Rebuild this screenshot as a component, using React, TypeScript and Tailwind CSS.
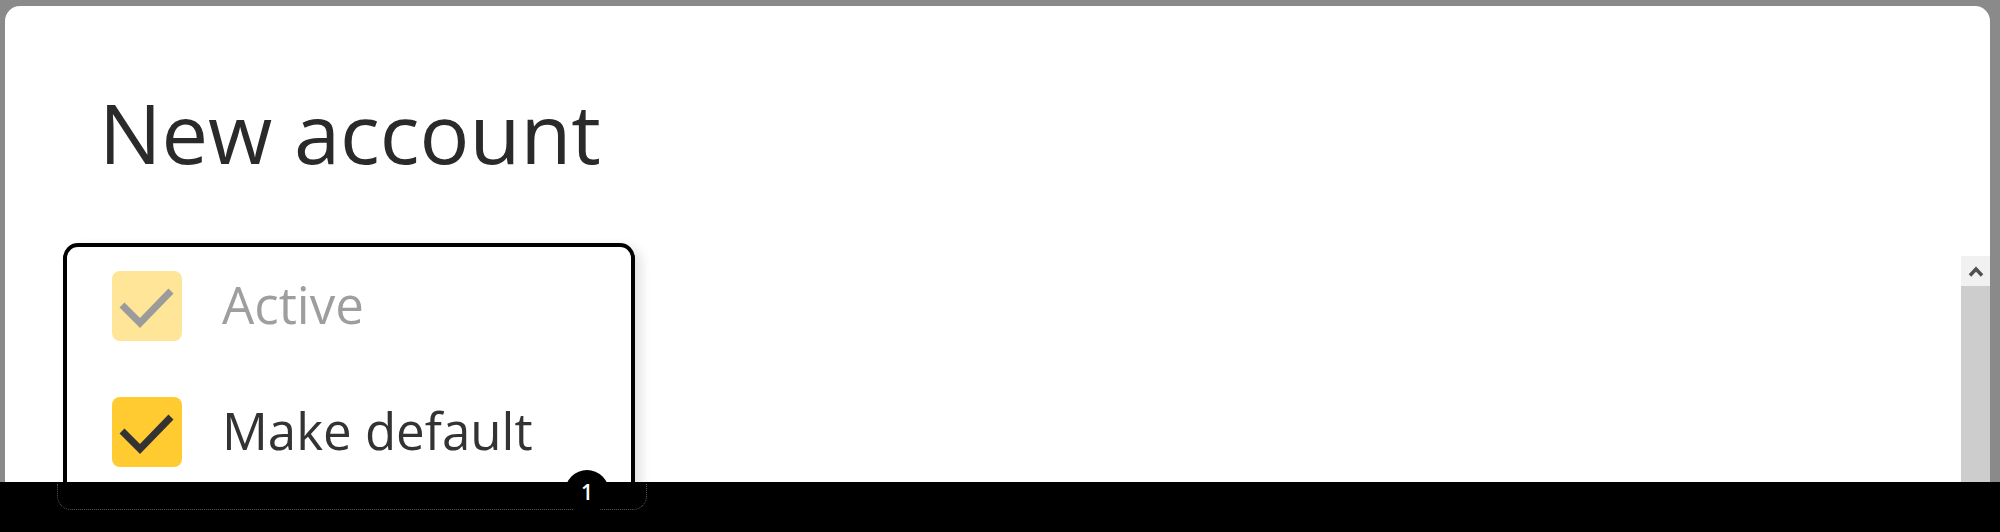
import React from "react";

function Check({ color }: { color: string }) {
  return (
    <svg width="70" height="70" viewBox="0 0 70 70" fill="none">
      <polyline
        points="10,34 28,52 59,20"
        stroke={color}
        strokeWidth="7"
        strokeLinecap="butt"
        strokeLinejoin="miter"
      />
    </svg>
  );
}

function Option({ label, disabled }: { label: string; disabled?: boolean }) {
  return (
    <label className="flex items-center gap-[40px]">
      <span
        className={
          disabled
            ? "w-[70px] h-[70px] rounded-[8px] bg-[#ffe598] shrink-0"
            : "w-[70px] h-[70px] rounded-[8px] bg-[#ffcb30] shrink-0"
        }
      >
        <Check color={disabled ? "#9b9b9b" : "#333333"} />
      </span>
      <span
        className={
          disabled
            ? "text-[51px] leading-[51px] text-[#9e9e9e] -mt-[4px]"
            : "text-[51px] leading-[51px] text-[#333333] -mt-[4px]"
        }
      >
        {label}
      </span>
    </label>
  );
}

export default function App() {
  return (
    <div className="w-[2000px] h-[532px] bg-[#8a8a8a] flex flex-col overflow-hidden relative font-['Open_Sans',sans-serif]">
      <div className="flex-1 min-h-0 pt-[6px] pl-[5px] pr-[10px] flex">
        <div className="flex-1 bg-white rounded-t-[15px] flex overflow-hidden">
          <div className="flex-1 pl-[58px] pt-[84px]">
            <h1 className="ml-[36px] text-[83px] leading-[84px] text-[#2a2a2a]">
              New account
            </h1>
            <div className="mt-[69px] w-[572px] border-4 border-black rounded-[15px] shadow-[6px_4px_12px_rgba(0,0,0,0.12)] pl-[45px] pt-[24px] pb-[40px] flex flex-col gap-[56px]">
              <Option label="Active" disabled />
              <Option label="Make default" />
            </div>
          </div>
          <div className="w-[29px] mt-[250px] flex flex-col">
            <div className="h-[30px] bg-[#f1f1f1] flex items-center justify-center">
              <svg width="16" height="11" viewBox="0 0 16 11" fill="none">
                <polyline
                  points="2,9.5 8,3 14,9.5"
                  stroke="#505050"
                  strokeWidth="3.5"
                />
              </svg>
            </div>
            <div className="flex-1 bg-[#cdcdcd]" />
          </div>
        </div>
      </div>
      <div className="h-[50px] bg-black shrink-0" />

      {/* annotation outline + step badge over the bottom bar */}
      <div className="absolute left-[57px] top-[484px] w-[590px] h-[26px] border border-dotted border-t-0 border-[#5a5a5a] rounded-b-[14px]" />
      <div className="absolute left-[565px] top-[470px] w-[44px] h-[44px] rounded-full bg-black flex items-center justify-center text-white text-[21px] font-semibold leading-none">
        1
      </div>
    </div>
  );
}
